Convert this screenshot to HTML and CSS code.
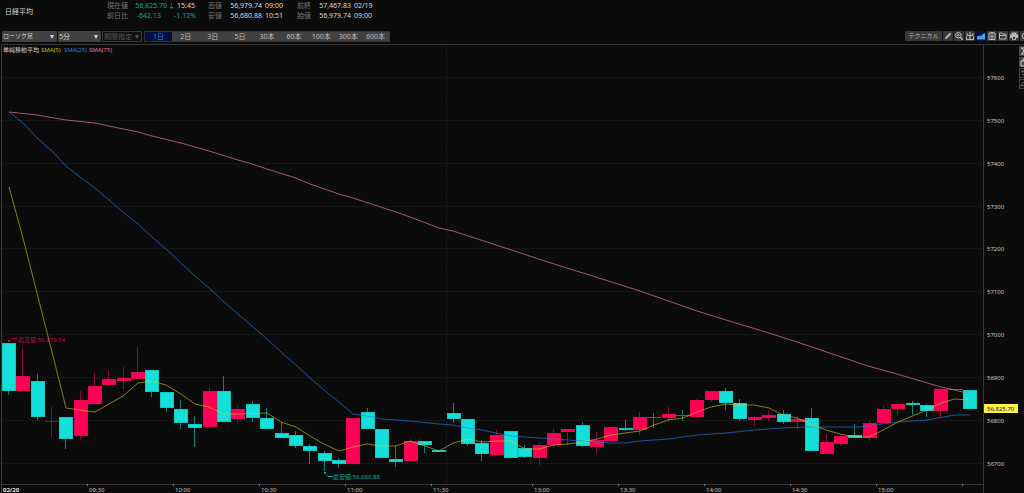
FILE: index.html
```html
<!DOCTYPE html>
<html lang="ja">
<head>
<meta charset="utf-8">
<meta name="viewport" content="width=device-width, initial-scale=1">
<title>日経平均</title>
<link rel="stylesheet" href="styles.css">
</head>
<body>
<header class="quote">
  <h1 class="quote-name">日経平均</h1>
  <div class="quote-grid">
    <span class="label">現在値</span><span class="num down">56,825.70</span><span class="side"><span class="down">↓</span>15:45</span>
    <span class="label">高値</span><span class="num">56,979.74</span><span class="time">09:00</span>
    <span class="label">前終</span><span class="num">57,467.83</span><span class="time">02/19</span>
    <span class="label">前日比</span><span class="num change down">-642.13</span><span class="side pct down">-1.12%</span>
    <span class="label">安値</span><span class="num">56,680.88</span><span class="time">10:51</span>
    <span class="label">始値</span><span class="num">56,979.74</span><span class="time">09:00</span>
  </div>
</header>

<nav class="toolbar">
  <div class="selects">
    <span class="select type"><select aria-label="チャート種別"><option>ローソク足</option></select></span>
    <span class="select span"><select aria-label="足種"><option>5分</option></select></span>
    <span class="select period off"><select aria-label="期間" disabled><option>期間指定</option></select></span>
  </div>
  <div class="ranges">
    <button type="button" aria-pressed="true">1日</button><button type="button">2日</button><button type="button">3日</button><button type="button">5日</button><button type="button">30本</button><button type="button">60本</button><button type="button">100本</button><button type="button">300本</button><button type="button">600本</button>
  </div>
  <div class="tools">
    <button type="button" class="technical">テクニカル</button>
    <button type="button" class="tool" aria-label="描画"><svg viewBox="0 0 10 10"><path d="M2 8l.6-2L7 1.700l1.300 1.300L4 7.400z" fill="currentColor" stroke="none"/></svg></button>
    <button type="button" class="tool" aria-label="拡大"><svg viewBox="0 0 10 10"><circle cx="4.300" cy="4.300" r="2.700"/><circle cx="4.300" cy="4.300" r=".8"/><path d="M6.300 6.300l2.400 2.400" stroke-width="1.400"/></svg></button>
    <button type="button" class="tool" aria-label="比較"><svg viewBox="0 0 10 10"><path d="M5 1v7.500M2 2v2.500h6V2M1.500 5.500v3h7v-3"/></svg></button>
    <button type="button" class="tool active" aria-label="出来高"><svg viewBox="0 0 10 10"><path d="M1 8.500V5.500l2-1 2 .5 2-2 2-1v6.500z" fill="currentColor" stroke="none"/></svg></button>
    <button type="button" class="tool" aria-label="一覧"><svg viewBox="0 0 10 10"><path d="M2 2h6v6.500H2zM3.500 1.500h3M3.500 4h3M3.500 5.500h3M3.500 7h3"/></svg></button>
    <button type="button" class="tool" aria-label="開く"><svg viewBox="0 0 10 10"><path d="M1.500 8V2h2.500l1 1.200h3V8zM1.500 8V4.500H8"/></svg></button>
    <button type="button" class="tool" aria-label="印刷"><svg viewBox="0 0 10 10"><path d="M1 3.500h8v3.500H1zM2.500 1.500h5v2h-5z" fill="currentColor" stroke="none"/><path d="M3.500 5.500h3v3h-3z" fill="#333"/></svg></button>
    <button type="button" class="tool" aria-label="設定"><svg viewBox="0 0 10 10"><circle cx="5" cy="5" r="2.800"/><circle cx="5" cy="5" r=".8"/></svg></button>
  </div>
</nav>

<main class="chart">
  <svg class="plot" viewBox="0 44 1024 449" role="img" aria-label="日経平均 5分足チャート">
    <g id="grid"></g>
    <path class="frame" d="M1.500 493V44.500H1024M983.500 44.500V493M1.500 484.500H983.500"/>
    <g class="legend">
      <text x="3" y="52" class="title">単純移動平均</text>
      <text x="41" y="52" class="sma5-text">SMA(5)</text>
      <text x="64" y="52" class="sma25-text">SMA(25)</text>
      <text x="89" y="52" class="sma75-text">SMA(75)</text>
    </g>
    <g id="candles"></g>
    <g class="note high"><rect x="8" y="340" width="2" height="2"/><path d="M10 340.500l2-2h5"/><text x="18" y="342">最高値:56,979.74</text></g>
    <g class="note low"><rect x="324" y="472" width="2" height="2"/><path d="M326 474.500l2 2h5"/><text x="333" y="479">最安値:56,680.88</text></g>
    <polyline class="sma75" points="9,112 37,115 66,120 95,123 109,126 138,132 152,136 181,143 195,147 209,151 238,160 252,164 267,169 296,178 310,184 339,194 353,198 396,212 410,217 439,228 453,231 490,243 554,264 583,273 640,291 697,311 726,320 769,333 800,343 868,366 897,374 941,387 955,390 970,394"/>
    <polyline class="sma25" points="9,112 23,123 37,138 52,151 66,166 80,177 95,188 109,200 123,212 138,224 152,237 166,249 181,263 195,276 209,288 224,302 238,314 252,326 267,339 281,352 296,365 310,378 324,390 339,402 353,414 367,416 382,419 396,420 410,421 439,424 453,425 468,428 482,430 496,433 511,436 525,437 568,440 582,441 597,442 611,443 625,443 640,441 668,439 683,437 697,435 726,433 754,430 783,428 805,427 820,427 860,427 882,424 898,422 927,420 955,415 970,415"/>
    <polyline class="sma5" points="9,187 23,238 37,293 52,352 66,408 80,410 95,412 109,404 123,396 138,383 152,381 166,385 181,394 195,404 209,407 224,414 238,414 267,413 281,422 296,427 310,436 324,444 339,451 353,447 367,444 382,446 396,446 410,441 425,446 439,451 453,443 468,439 482,442 496,441 511,441 525,449 539,449 554,445 568,444 582,442 597,439 611,435 625,433 640,431 654,425 668,420 683,418 697,412 711,407 726,404 740,405 754,405 769,408 783,415 797,418 812,425 826,430 840,434 855,437 869,437 883,430 898,422 927,410 941,403 955,399 970,400"/>
    <g id="axis" class="axis"></g>
    <g class="last-price"><rect x="984" y="404" width="34" height="9"/><text x="987" y="411">56,825.70</text></g>
  </svg>
  <div class="dock">
    <button type="button" aria-label="閉じる"><svg viewBox="0 0 10 10"><path d="M2 2h6M2 8h6M3 2l4 6M7 2L3 8"/></svg></button>
    <button type="button" aria-label="固定"><svg viewBox="0 0 10 10"><path d="M2 4h5v5H2zM4 4V2h5v5H7"/></svg></button>
    <button type="button" class="dim" aria-label="元に戻す"><svg viewBox="0 0 10 10"><path d="M2 3h5v4H3M4 1L2 3l2 2"/></svg></button>
    <button type="button" class="dim" aria-label="消去"><svg viewBox="0 0 10 10"><path d="M1 7l3-4h5L7 7z"/></svg></button>
  </div>
</main>
<script src="chart.js"></script>
</body>
</html>
```
FILE: styles.css
```css
* { box-sizing: border-box; }

body {
  margin: 0;
  overflow: hidden;
  background: #0b0b0b;
  color: #d8d8d8;
  font: 7px/10px "Noto Sans", "Noto Sans CJK JP", sans-serif;
}

button, select { font: inherit; color: inherit; border: 0; border-radius: 0; margin: 0; padding: 0; }

.quote { display: flex; gap: 74px; height: 31px; padding: 1px 5px 0; }
.quote-name { margin: 6px 0 0; font-size: 7px; font-weight: 400; white-space: nowrap; }
.quote-grid {
  display: grid;
  grid-template-columns: 23px 37px 41px 22px 32px 35px 22px 32px 24px;
  grid-auto-rows: 10px;
  white-space: nowrap;
}
.label { color: #777; }
.num { text-align: right; }
.change { padding-right: 6px; }
.side { padding-left: 1px; }
.side .down { padding-right: 2px; }
.pct { padding-left: 7px; }
.time { padding-left: 3px; }
.down { color: #12a79b; }

.toolbar { display: flex; height: 13px; padding-left: 2px; overflow: hidden; }
.selects { display: flex; gap: 1px; }
.select { position: relative; height: 11px; background: #414141; }
.select::after {
  content: "";
  position: absolute;
  right: 3px;
  top: 4px;
  border: 2px solid transparent;
  border-top: 4px solid #d8d8d8;
  border-bottom: 0;
  pointer-events: none;
}
.select select { display: block; width: 100%; height: 11px; padding-left: 1px; appearance: none; background: none; line-height: 11px; opacity: 1; }
.type { width: 55px; font-size: 6px; }
.span { width: 43px; }
.period { width: 40px; border: 1px solid #3a3a3a; background: #111; color: #555; }
.period select { height: 9px; line-height: 9px; }
.period::after { right: 2px; top: 3px; border-top-color: #555; }

.ranges { display: grid; grid-template-columns: repeat(9, 1fr); width: 246px; height: 11px; margin-left: 2px; border: 1px solid #333; }
.ranges button { background: #414141; color: #bbb; line-height: 9px; }
.ranges button[aria-pressed="true"] { background: #04103a; color: #168bdc; }

.tools { display: flex; gap: 1px; height: 10px; margin-left: auto; margin-right: -6px; }
.tools button { background: #393939; color: #b8b8b8; }
.tools .technical { width: 37px; font-size: 6px; line-height: 10px; white-space: nowrap; }
.tool { width: 10px; height: 10px; }
.tools .active { background: #05103c; color: #34a4f5; }
.tool svg, .dock svg { display: block; width: 100%; height: 100%; fill: none; stroke: currentColor; stroke-width: 1; }

.chart { position: relative; overflow: hidden; }
.plot { display: block; width: 100%; height: auto; font-size: 6px; }
.frame { fill: none; stroke: #383838; }
.grid { stroke: #1c1c1c; stroke-dasharray: 2 1; }
.legend .title { fill: #d0d0d0; }
.sma5-text { fill: #c8bc1c; }
.sma25-text { fill: #2b79dd; }
.sma75-text { fill: #e8719a; }
.sma5, .sma25, .sma75 { fill: none; stroke-width: 1; }
.sma5 { stroke: #d8cc20; opacity: .6; }
.sma25 { stroke: #2a78e8; opacity: .65; }
.sma75 { stroke: #e87898; opacity: .7; }
.up-wick { stroke: #8c0836; }
.up-body { fill: #ff0055; stroke: #e8064f; }
.down-wick { stroke: #13807a; }
.down-body { fill: #14e0da; stroke: #12c8c2; }
.note path { fill: none; stroke: currentColor; }
.note { fill: currentColor; }
.high { color: #c80646; }
.low { color: #12a59c; }
.axis text { fill: #c4c4c4; }
.axis .date { fill: #e0e0e0; font-weight: 700; }
.axis path { stroke: #777; }
.last-price rect { fill: #fff04a; }
.last-price text { fill: #222; }

.dock { position: absolute; top: 2px; right: -5px; display: grid; gap: 1px; }
.dock button { width: 10px; height: 10px; background: #444; color: #ccc; }
.dock .dim { border: 1px solid #444; background: #111; color: #777; }
```
FILE: chart.js
```js
const NS = "http://www.w3.org/2000/svg";
const LEFT = 2;
const STEP = 14.343;

// [direction, body top, body bottom, wick top, wick bottom]
const candles = [
  ["d",343,391,343,395],["u",376,391,348,391],["d",381,417,374,420],["u",421,422,407,437],
  ["d",417,439,417,449],["u",400,436,391,440],["u",386,404,373,404],["u",379,385,371,386],
  ["u",378,381,367,389],["u",372,379,347,379],["d",370,392,370,397],["d",392,408,392,412],
  ["d",409,423,400,429],["d",424,428,416,447],["u",391,427,387,427],["d",391,422,376,422],
  ["u",409,419,405,423],["d",404,418,401,422],["d",418,429,408,429],["d",433,438,422,438],
  ["d",435,446,431,448],["d",446,451,444,464],["d",453,461,451,471],["d",460,464,458,468],
  ["u",418,464,418,464],["d",412,429,408,429],["d",429,458,429,458],["d",459,462,446,467],
  ["u",441,461,439,461],["d",441,445,441,453],["d",450,452,450,452],["d",413,419,403,423],
  ["d",419,444,419,446],["d",443,454,440,461],["u",435,455,430,455],["d",431,458,431,458],
  ["d",448,457,445,458],["u",445,458,443,465],["u",433,445,429,448],["u",429,432,429,445],
  ["d",425,446,422,447],["u",440,447,432,454],["u",427,441,426,441],["d",428,430,420,431],
  ["u",417,430,412,435],["d",417,418,413,428],["u",414,418,407,422],["d",415,416,410,421],
  ["u",400,417,399,417],["u",391,400,391,402],["d",391,403,388,410],["d",403,419,399,421],
  ["u",417,420,416,426],["u",415,418,410,421],["d",414,422,410,424],["u",419,422,416,429],
  ["d",418,451,408,451],["u",442,454,434,454],["u",436,444,435,446],["d",435,438,424,438],
  ["u",423,438,420,441],["u",409,423,405,423],["u",404,409,402,416],["d",403,405,401,415],
  ["d",405,411,404,417],["u",389,411,388,418],["d",389,390,389,390],["d",390,409,390,409]
];

function add(parent, name, attrs, text) {
  const el = document.createElementNS(NS, name);
  for (const key in attrs) el.setAttribute(key, attrs[key]);
  if (text) el.textContent = text;
  parent.appendChild(el);
}

const grid = document.getElementById("grid");
const axis = document.getElementById("axis");
const layer = document.getElementById("candles");

for (let i = 0; i < 10; i++) {
  const y = Math.round(77 + i * 42.87);
  add(grid, "path", { class: "grid", d: `M2 ${y + 0.5}H983` });
  add(axis, "text", { x: 987, y: y + 3 }, String(57600 - i * 100));
}
add(grid, "path", { class: "grid", d: "M446.5 45V484" });

candles.forEach(([dir, top, bottom, high, low], i) => {
  const kind = dir === "u" ? "up" : "down";
  const x = Math.round(LEFT + i * STEP);
  add(layer, "path", { class: `${kind}-wick`, d: `M${x + 6.5} ${high}V${low}` });
  if (bottom - top < 2) {
    add(layer, "path", { class: `${kind}-wick`, d: `M${x} ${top + 0.5}H${x + 14}` });
  } else {
    add(layer, "rect", { class: `${kind}-body`, x: x + 0.5, y: top + 0.5, width: 13, height: bottom - top - 1 });
  }
});

add(axis, "text", { class: "date", x: 3, y: 492 }, "02/20");
const ticks = [[6, "09:30"], [12, "10:00"], [18, "10:30"], [24, "11:00"], [30, "11:30"],
  [37, "13:00"], [43, "13:30"], [49, "14:00"], [55, "14:30"], [61, "15:00"], [67, ""]];
ticks.forEach(([i, label]) => {
  const x = Math.round(LEFT + i * STEP);
  add(axis, "path", { d: `M${x - 0.5} 484V486` });
  if (label) add(axis, "text", { x: x + 1, y: 492 }, label);
});
```
